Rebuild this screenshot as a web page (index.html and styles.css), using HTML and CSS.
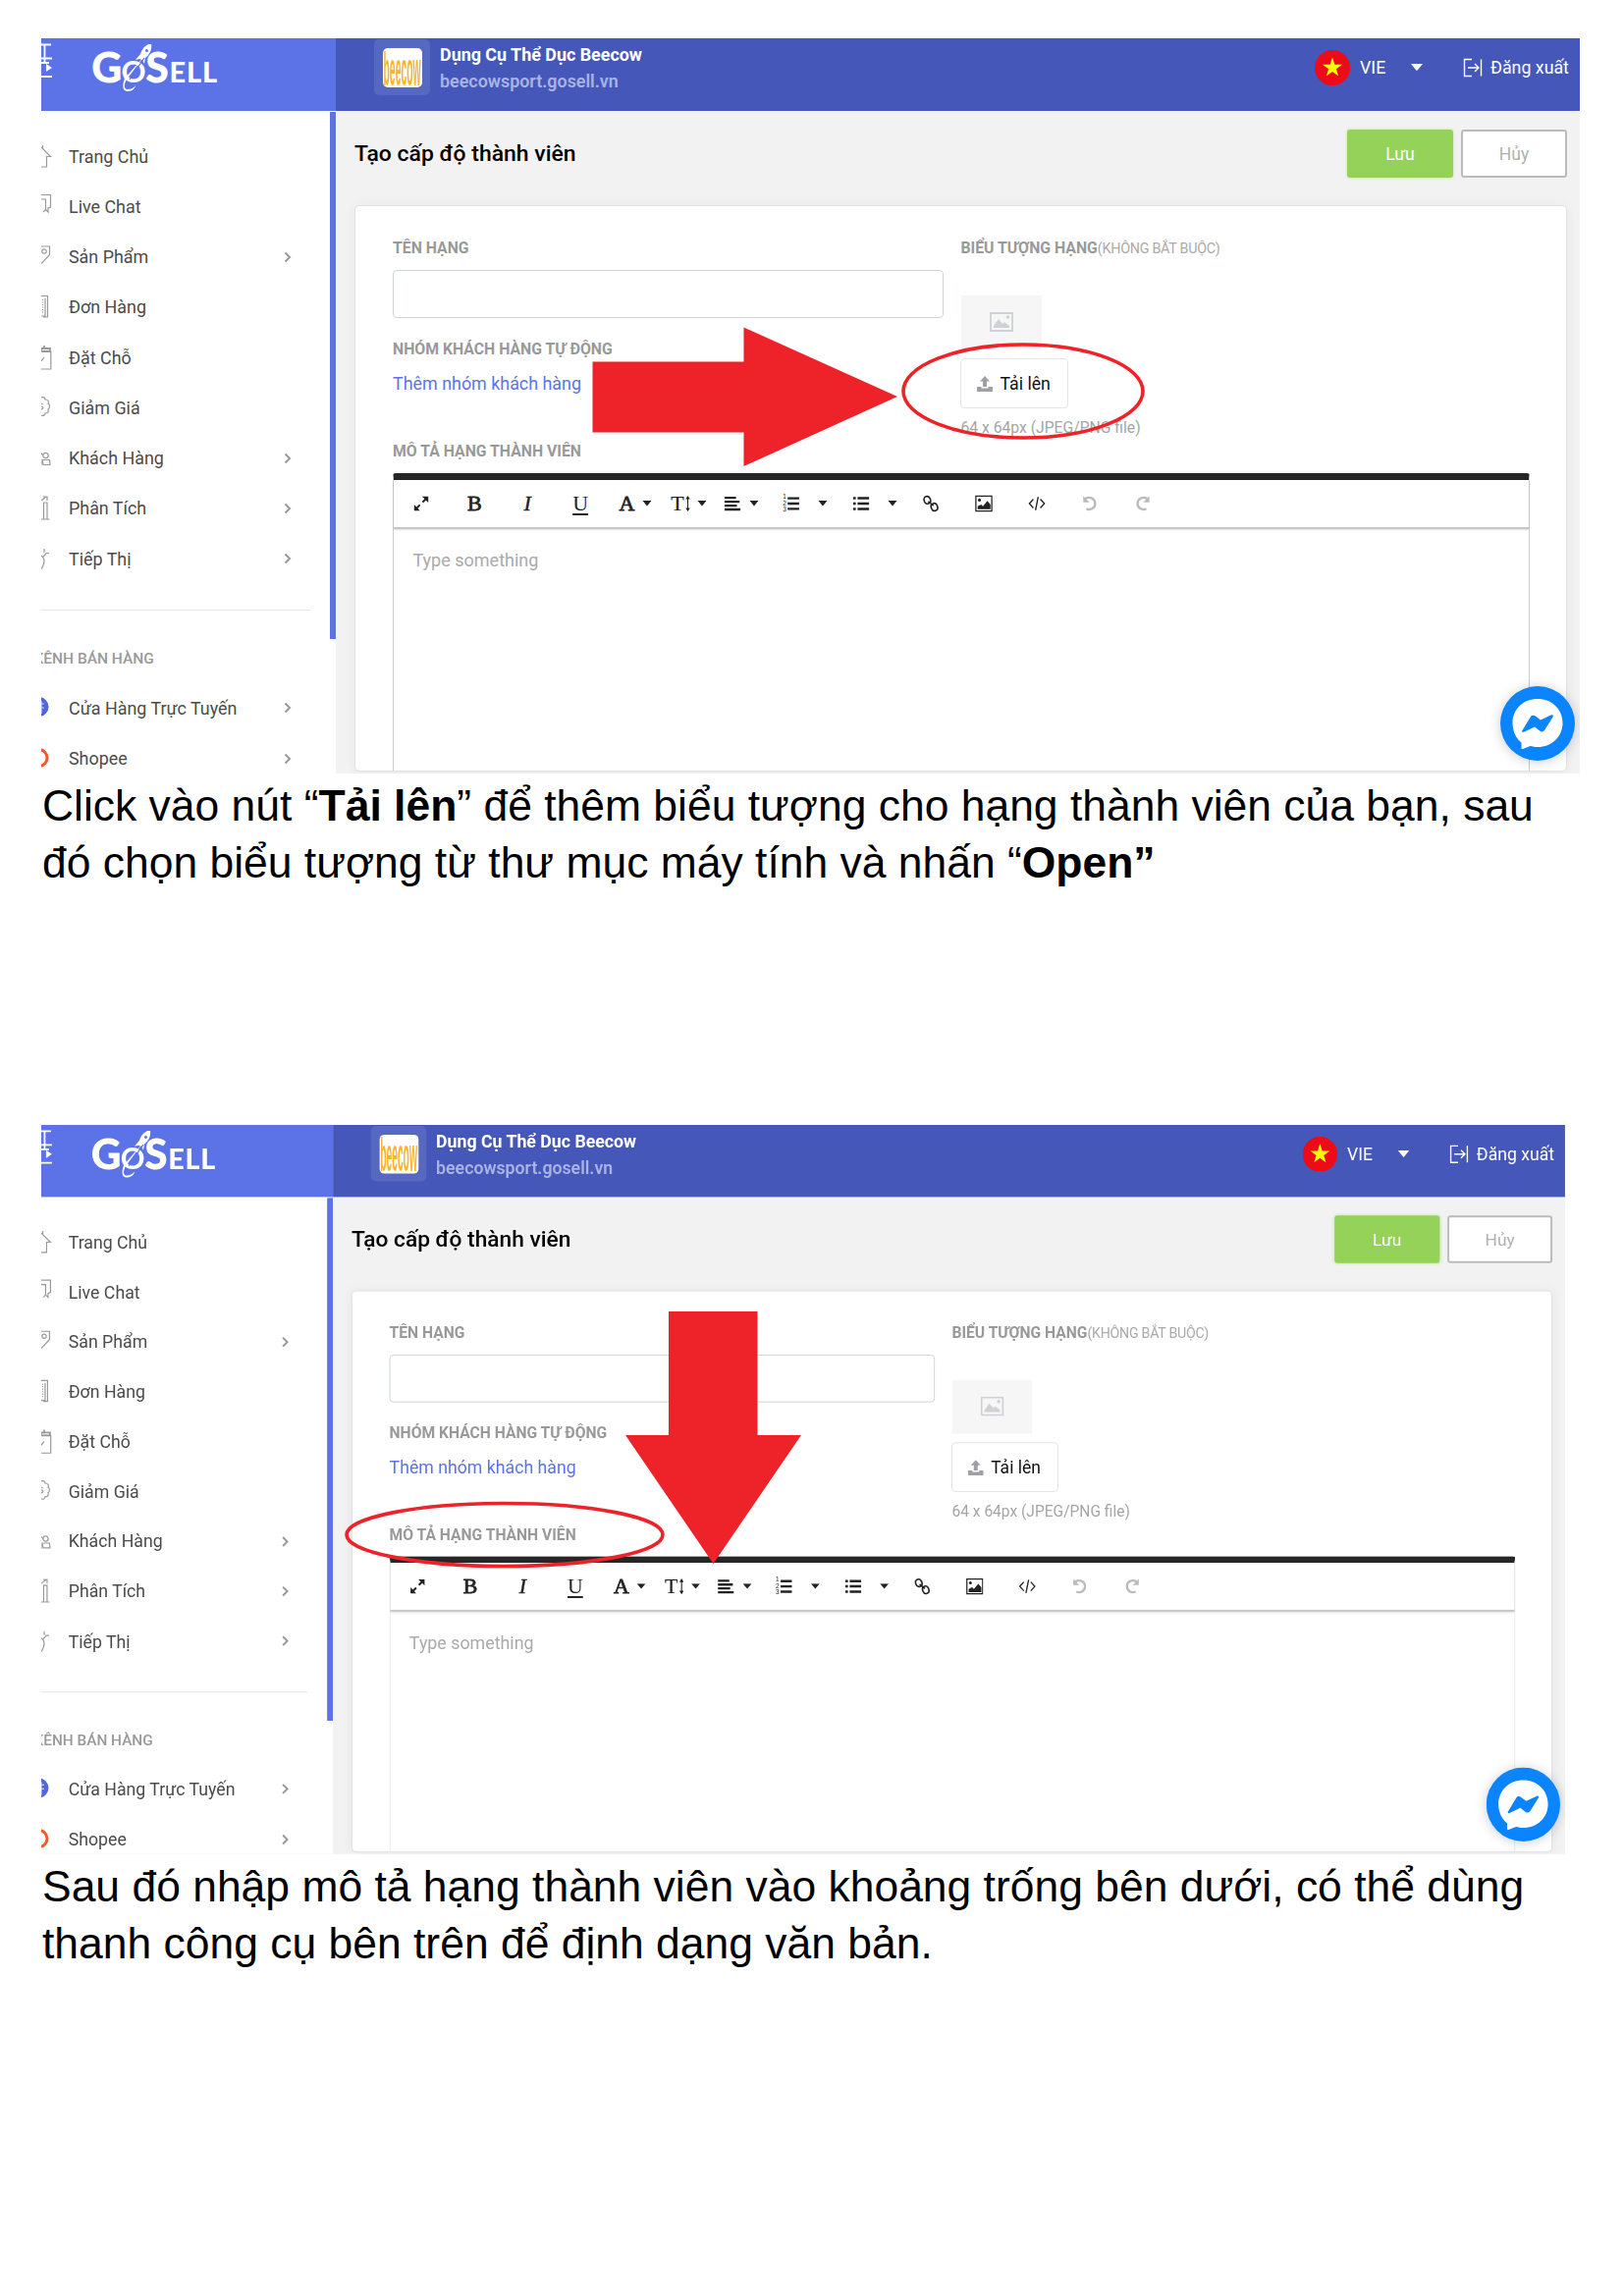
FILE: index.html
```html
<!DOCTYPE html>
<html lang="vi">
<head>
<meta charset="utf-8">
<title>Tạo cấp độ thành viên</title>
<link rel="stylesheet" href="styles.css">
</head>
<body>
<svg class="sprite" aria-hidden="true">
  <symbol id="menu" viewBox="0 0 12 40"><path d="M0 1.500h10M3.500 1.500v18M0 15.500h11M0 20h8M0 34h11" fill="none" stroke="#fff" stroke-width="1.800"/><path d="M5 21l6 4-6 4z" fill="#fff"/></symbol>
  <symbol id="home" viewBox="0 0 12 26"><path d="M1.500 2v4M0 4l9.500 9.500H5.500V24H0"/></symbol>
  <symbol id="chat" viewBox="0 0 12 26"><path d="M0 1.500h9.500V14L7 15v4l-3-3M0 6h4.500v10.500L2 19"/></symbol>
  <symbol id="tag" viewBox="0 0 12 26"><path d="M0 2h8.500v8.500L0 19.500"/><circle cx="3" cy="7" r="2.200"/></symbol>
  <symbol id="order" viewBox="0 0 12 26"><path d="M0 1.500h6.500V23H2M4 4v18H0"/><path d="M1.500 5v15" stroke-dasharray="1 1.500"/></symbol>
  <symbol id="book" viewBox="0 0 12 26"><path d="M0 7h9.800v18H0M0 17l3-4"/><path d="M0 4h9v3H0zM3 1v4" stroke-width="1.800"/></symbol>
  <symbol id="sale" viewBox="0 0 12 26"><path d="M0 3c2-1 4 0 4 2 3 0 4 2 3 4 2 1 2 5 0 6 1 3-1 4-3 4 0 2-2 3-4 2M0 9l1.500 1M0 15c3-1 2-3 0-3"/></symbol>
  <symbol id="users" viewBox="0 0 12 26"><circle cx="4.500" cy="10" r="2.700"/><path d="M0 8l2 2M1 14.500h7.500l.5 5H2zM0 16v4"/></symbol>
  <symbol id="chart" viewBox="0 0 12 26"><path d="M2.500 24V7h3.500v17M0 24h8.500M0 5l5-4M2 1h4v4"/></symbol>
  <symbol id="promo" viewBox="0 0 12 26"><path d="M0 24c3-5 4-9 2-12l-2-2M3 3v4M4.500 7.500h3.500M2 11l3-3"/></symbol>
  <symbol id="globe" viewBox="0 0 12 26"><circle cx="-2.500" cy="12" r="10" fill="#4f66e0" stroke="none"/><path d="M0 6v13M0 9h3M0 13h3" stroke="#cdd5ff"/></symbol>
  <symbol id="shop" viewBox="0 0 12 26"><circle cx="-2.500" cy="12" r="8.500" fill="none" stroke="#ee5a2c" stroke-width="3"/></symbol>
  <symbol id="chev" viewBox="0 0 8 12"><path d="M1.500 1.500L6 6l-4.500 4.500" fill="none" stroke="#999" stroke-width="2"/></symbol>
  <symbol id="caret" viewBox="0 0 10 6"><path d="M.5 0h9L5 5.500z" fill="currentColor"/></symbol>
  <symbol id="rocket" viewBox="0 0 136 60">
    <path d="M53 12L35 36c-3 5-3 10 1 10 3 0 6-1 8-4-1 5-5 6-9 6-5-1-4-8-2-13z" fill="#fff"/>
    <path d="M60 -1c1 6-1 11-6 15l-1 6-2-4-3-1-4 1 5-6c2-6 5-9 11-11z" fill="#fff"/>
    <path d="M38 36L53 14" stroke="#5c73e8" stroke-width="1.200"/>
    <circle cx="55.500" cy="6.500" r="1.500" fill="#5c73e8"/>
  </symbol>
  <symbol id="flag" viewBox="0 0 36 36"><circle cx="18" cy="18" r="18" fill="#ee0a17"/><path d="M18 7.500l2.400 7.200h7.600l-6.100 4.500 2.300 7.300-6.200-4.500-6.200 4.500 2.300-7.300-6.100-4.500h7.600z" fill="#ff0"/></symbol>
  <symbol id="exit" viewBox="0 0 20 20"><path d="M9 1.500H1.500v17H9M5 10h11M12 6l4 4-4 4M18.500 1.500v17" fill="none" stroke="#fff" stroke-width="1.400"/></symbol>
  <symbol id="pic" viewBox="0 0 24 20"><path d="M1 1h22v18H1z" fill="none" stroke="currentColor" stroke-width="1.800"/><circle cx="18.500" cy="5" r="1.800" fill="currentColor"/><path d="M4 16V14l5-7 4 5 2-2 5 4v2z" fill="currentColor"/></symbol>
  <symbol id="up" viewBox="0 0 16 16"><path d="M8 0l5 5.500h-3V11H6V5.500H3zM0 11h4.500v1.500h7V11H16v5H0z" fill="currentColor"/></symbol>
  <symbol id="expand" viewBox="0 0 20 20"><path d="M2 11l6.500 7H2zM18 9V2h-7z" fill="currentColor"/><path d="M4 16l4.500-4.500M11.500 8.500L16 4" stroke="currentColor" stroke-width="2.200"/></symbol>
  <symbol id="left" viewBox="0 0 20 20"><path d="M1 3.500h13M1 7.900h17M1 12.300h14M1 16.700h18" stroke="currentColor" stroke-width="2.600"/></symbol>
  <symbol id="tall" viewBox="0 0 5 20"><path d="M2.500 4v12" stroke="currentColor" stroke-width="1.200"/><path d="M2.500 1L5 5H0zM2.500 19L5 15H0z" fill="currentColor"/></symbol>
  <symbol id="lines" viewBox="0 0 14 20"><path d="M0 4h13M0 10h13M0 16h13" stroke="currentColor" stroke-width="2.600"/></symbol>
  <symbol id="ul" viewBox="0 0 20 20"><path d="M1 4h3M1 10h3M1 16h3M6 4h13M6 10h13M6 16h13" stroke="currentColor" stroke-width="2.800"/></symbol>
  <symbol id="link" viewBox="0 0 20 20"><g fill="none" stroke="currentColor" stroke-width="1.800"><rect x="2.500" y="1.800" width="7" height="8.500" rx="3.500" transform="rotate(-20 6 6)"/><rect x="10.500" y="9.700" width="7" height="8.500" rx="3.500" transform="rotate(-20 14 14)"/><path d="M7 7.500l6 5"/></g></symbol>
  <symbol id="img" viewBox="0 0 20 20"><path d="M1 1.500h18v17H1z" fill="none" stroke="currentColor" stroke-width="1.400"/><circle cx="5" cy="6" r="1.700" fill="currentColor"/><path d="M3 16.500V13l4-2 2 2 5-6 3.500 4v5.500z" fill="currentColor"/></symbol>
  <symbol id="code" viewBox="0 0 20 16"><path d="M6 3L1.500 8 6 13M14 3l4.500 5-4.500 5M11.500 .5l-3 15" fill="none" stroke="currentColor" stroke-width="1.500"/></symbol>
  <symbol id="undo" viewBox="0 0 20 20"><path d="M5 4.500c5-3 11 0 11 5.500 0 5-5 8-10 6" fill="none" stroke="currentColor" stroke-width="2.600"/><path d="M2.500 1.500v7h7z" fill="currentColor"/></symbol>
  <symbol id="msg" viewBox="0 0 76 76"><circle cx="38" cy="38" r="38" fill="#0a84ff"/><path d="M38 13c14.500 0 25.500 10.500 25.500 24.500S52.500 62 38 62c-3 0-5-.5-7.500-1L23 64c-1 .3-1.500 0-1.500-1v-5.500C16 53 12.500 46 12.500 37.500 12.500 23.500 23.500 13 38 13z" fill="#fff"/><path d="M22.500 45l8.500-14c1-1.500 3-1.700 4.500-.7l5.500 4.200 10.500-4.900c2-.9 3 .2 2 1.800L45 45c-1 1.500-3 1.800-4.500.8L35 41.500l-10.500 5c-2 1-3 0-2-1.500z" fill="#0a84ff"/></symbol>
</svg>

<main class="page">
  <section class="shot shot-1">
    <div class="app">
      <aside class="side">
        <div class="brand"><svg class="menu"><use href="#menu"/></svg><div class="logo"><span>G</span><span class="o">O</span><span>S</span><span class="ell">ELL</span><svg><use href="#rocket"/></svg></div></div>
        <nav class="nav">
          <a><svg><use href="#home"/></svg><span>Trang Chủ</span></a>
          <a><svg><use href="#chat"/></svg><span>Live Chat</span></a>
          <a><svg><use href="#tag"/></svg><span>Sản Phẩm</span><svg class="chev"><use href="#chev"/></svg></a>
          <a><svg><use href="#order"/></svg><span>Đơn Hàng</span></a>
          <a><svg><use href="#book"/></svg><span>Đặt Chỗ</span></a>
          <a><svg><use href="#sale"/></svg><span>Giảm Giá</span></a>
          <a><svg><use href="#users"/></svg><span>Khách Hàng</span><svg class="chev"><use href="#chev"/></svg></a>
          <a><svg><use href="#chart"/></svg><span>Phân Tích</span><svg class="chev"><use href="#chev"/></svg></a>
          <a><svg><use href="#promo"/></svg><span>Tiếp Thị</span><svg class="chev"><use href="#chev"/></svg></a>
          <h3>KÊNH BÁN HÀNG</h3>
          <a><svg><use href="#globe"/></svg><span>Cửa Hàng Trực Tuyến</span><svg class="chev"><use href="#chev"/></svg></a>
          <a><svg><use href="#shop"/></svg><span>Shopee</span><svg class="chev"><use href="#chev"/></svg></a>
        </nav>
      </aside>
      <div class="main">
        <header class="top">
          <div class="avatar"><div class="bee"><span>beecow</span></div></div>
          <div class="store"><b>Dụng Cụ Thể Dục Beecow</b><span>beecowsport.gosell.vn</span></div>
          <div class="tools"><svg class="flag"><use href="#flag"/></svg><span class="lang">VIE</span><svg class="down"><use href="#caret"/></svg><svg class="exit"><use href="#exit"/></svg><span class="out">Đăng xuất</span></div>
        </header>
        <div class="heading"><h1>Tạo cấp độ thành viên</h1><button class="btn save">Lưu</button><button class="btn cancel">Hủy</button></div>
        <div class="card">
          <div class="form">
            <div class="col">
              <label>TÊN HẠNG</label>
              <div class="input"></div>
              <label>NHÓM KHÁCH HÀNG TỰ ĐỘNG</label>
              <a class="add">Thêm nhóm khách hàng</a>
              <label>MÔ TẢ HẠNG THÀNH VIÊN</label>
            </div>
            <div class="col">
              <label>BIỂU TƯỢNG HẠNG<i>(KHÔNG BẮT BUỘC)</i></label>
              <div class="thumb"><svg><use href="#pic"/></svg></div>
              <div class="upload"><svg><use href="#up"/></svg><span>Tải lên</span></div>
              <p class="hint">64 x 64px (JPEG/PNG file)</p>
            </div>
          </div>
          <div class="editor">
            <div class="bar">
              <span><svg><use href="#expand"/></svg></span><span><b>B</b></span><span><em>I</em></span><span><u>U</u></span>
              <span class="menu-btn"><b>A</b><svg class="car"><use href="#caret"/></svg></span>
              <span class="menu-btn"><b class="size">T</b><svg class="tall"><use href="#tall"/></svg><svg class="car"><use href="#caret"/></svg></span>
              <span class="menu-btn"><svg><use href="#left"/></svg><svg class="car"><use href="#caret"/></svg></span>
              <span class="list"><span class="ol"><small>1<br>2<br>3</small><svg><use href="#lines"/></svg></span><svg class="car"><use href="#caret"/></svg></span>
              <span class="list"><svg><use href="#ul"/></svg><svg class="car"><use href="#caret"/></svg></span>
              <span><svg><use href="#link"/></svg></span><span><svg><use href="#img"/></svg></span><span><svg><use href="#code"/></svg></span><span class="off"><svg><use href="#undo"/></svg></span><span class="off flip"><svg><use href="#undo"/></svg></span>
            </div>
            <p class="ph">Type something</p>
          </div>
        </div>
      </div>
      <svg class="msg"><use href="#msg"/></svg>
    </div>
    <svg class="marks" viewBox="0 0 1567 749"><path d="M561.500 329.500H715.500V294.500L872 365 715.500 436V401.500H561.500z" fill="#ee2229"/><ellipse cx="1000" cy="359.500" rx="122" ry="47.500" fill="none" stroke="#ee2229" stroke-width="3.600"/></svg>
  </section>
  <p class="caption">Click vào nút “<b>Tải lên</b>” để thêm biểu tượng cho hạng thành viên của bạn, sau<br>đó chọn biểu tượng từ thư mục máy tính và nhấn “<b>Open”</b></p>

  <section class="shot shot-2">
    <div class="app">
      <aside class="side">
        <div class="brand"><svg class="menu"><use href="#menu"/></svg><div class="logo"><span>G</span><span class="o">O</span><span>S</span><span class="ell">ELL</span><svg><use href="#rocket"/></svg></div></div>
        <nav class="nav">
          <a><svg><use href="#home"/></svg><span>Trang Chủ</span></a>
          <a><svg><use href="#chat"/></svg><span>Live Chat</span></a>
          <a><svg><use href="#tag"/></svg><span>Sản Phẩm</span><svg class="chev"><use href="#chev"/></svg></a>
          <a><svg><use href="#order"/></svg><span>Đơn Hàng</span></a>
          <a><svg><use href="#book"/></svg><span>Đặt Chỗ</span></a>
          <a><svg><use href="#sale"/></svg><span>Giảm Giá</span></a>
          <a><svg><use href="#users"/></svg><span>Khách Hàng</span><svg class="chev"><use href="#chev"/></svg></a>
          <a><svg><use href="#chart"/></svg><span>Phân Tích</span><svg class="chev"><use href="#chev"/></svg></a>
          <a><svg><use href="#promo"/></svg><span>Tiếp Thị</span><svg class="chev"><use href="#chev"/></svg></a>
          <h3>KÊNH BÁN HÀNG</h3>
          <a><svg><use href="#globe"/></svg><span>Cửa Hàng Trực Tuyến</span><svg class="chev"><use href="#chev"/></svg></a>
          <a><svg><use href="#shop"/></svg><span>Shopee</span><svg class="chev"><use href="#chev"/></svg></a>
        </nav>
      </aside>
      <div class="main">
        <header class="top">
          <div class="avatar"><div class="bee"><span>beecow</span></div></div>
          <div class="store"><b>Dụng Cụ Thể Dục Beecow</b><span>beecowsport.gosell.vn</span></div>
          <div class="tools"><svg class="flag"><use href="#flag"/></svg><span class="lang">VIE</span><svg class="down"><use href="#caret"/></svg><svg class="exit"><use href="#exit"/></svg><span class="out">Đăng xuất</span></div>
        </header>
        <div class="heading"><h1>Tạo cấp độ thành viên</h1><button class="btn save">Lưu</button><button class="btn cancel">Hủy</button></div>
        <div class="card">
          <div class="form">
            <div class="col">
              <label>TÊN HẠNG</label>
              <div class="input"></div>
              <label>NHÓM KHÁCH HÀNG TỰ ĐỘNG</label>
              <a class="add">Thêm nhóm khách hàng</a>
              <label>MÔ TẢ HẠNG THÀNH VIÊN</label>
            </div>
            <div class="col">
              <label>BIỂU TƯỢNG HẠNG<i>(KHÔNG BẮT BUỘC)</i></label>
              <div class="thumb"><svg><use href="#pic"/></svg></div>
              <div class="upload"><svg><use href="#up"/></svg><span>Tải lên</span></div>
              <p class="hint">64 x 64px (JPEG/PNG file)</p>
            </div>
          </div>
          <div class="editor">
            <div class="bar">
              <span><svg><use href="#expand"/></svg></span><span><b>B</b></span><span><em>I</em></span><span><u>U</u></span>
              <span class="menu-btn"><b>A</b><svg class="car"><use href="#caret"/></svg></span>
              <span class="menu-btn"><b class="size">T</b><svg class="tall"><use href="#tall"/></svg><svg class="car"><use href="#caret"/></svg></span>
              <span class="menu-btn"><svg><use href="#left"/></svg><svg class="car"><use href="#caret"/></svg></span>
              <span class="list"><span class="ol"><small>1<br>2<br>3</small><svg><use href="#lines"/></svg></span><svg class="car"><use href="#caret"/></svg></span>
              <span class="list"><svg><use href="#ul"/></svg><svg class="car"><use href="#caret"/></svg></span>
              <span><svg><use href="#link"/></svg></span><span><svg><use href="#img"/></svg></span><span><svg><use href="#code"/></svg></span><span class="off"><svg><use href="#undo"/></svg></span><span class="off flip"><svg><use href="#undo"/></svg></span>
            </div>
            <p class="ph">Type something</p>
          </div>
        </div>
      </div>
      <svg class="msg"><use href="#msg"/></svg>
    </div>
    <svg class="marks" viewBox="0 0 1552 743"><path d="M639 190H729.500V316H774L684.500 447 595 316H639z" fill="#ee2229"/><ellipse cx="472" cy="417.500" rx="161" ry="32" fill="none" stroke="#ee2229" stroke-width="3.600"/></svg>
  </section>
  <p class="caption">Sau đó nhập mô tả hạng thành viên vào khoảng trống bên dưới, có thể dùng<br>thanh công cụ bên trên để định dạng văn bản.</p>
</main>
</body>
</html>
```
FILE: styles.css
```css
* { box-sizing: border-box; }
body { margin: 0; background: #fff; font-family: Roboto, sans-serif; color: #4b4b4b; }
h1, h3, p { margin: 0; }
svg { display: block; flex: none; overflow: hidden; }
.sprite { position: absolute; width: 0; height: 0; }
.page { height: 2339px; padding: 39px 0 0 42px; overflow: hidden; }

.shot { position: relative; width: 1567px; height: 749px; }
.shot-2 { width: 1552px; height: 743px; margin-top: 237px; }
.app { position: relative; display: flex; width: 1567px; height: 749px; overflow: hidden; background: #f2f2f2; }
.shot-2 .app { transform: scale(.9904, .9918); transform-origin: 0 0; }
.marks { position: absolute; inset: 0; width: 100%; height: 100%; }

/* Sidebar */
.side { width: 300px; height: 749px; overflow: hidden; background: #fff; }
.brand { display: flex; height: 74px; background: #5c73e8; }
.menu { width: 12px; height: 40px; margin-top: 5px; }
.logo { position: relative; display: flex; align-items: baseline; width: 136px; height: 60px; margin: 4px 0 0 39.500px; font: 700 42px/50px Lato, sans-serif; color: #fff; -webkit-text-stroke: 1px #fff; }
.logo span { width: 30px; }
.logo .o { width: 25px; font-size: 31px; -webkit-text-stroke-width: 0; }
.logo span:nth-child(3) { width: 24px; }
.logo .ell { width: 54px; font-size: 29px; font-weight: 900; letter-spacing: .8px; -webkit-text-stroke-width: 0; }
.logo svg { position: absolute; left: 0; top: 2px; width: 136px; height: 60px; overflow: visible; }
.nav { position: relative; padding-top: 20.500px; height: 675px; }
.nav::after { content: ""; position: absolute; top: 1px; right: 0; width: 6px; height: 537px; background: #5c73e8; }
.nav a { display: flex; align-items: center; height: 51.250px; font-size: 17.900px; }
.nav a svg { width: 12px; height: 26px; fill: none; stroke: #999; stroke-width: 1.200; }
.nav a span { width: 219px; margin-left: 16px; white-space: nowrap; }
.nav a .chev { width: 8px; height: 12px; }
.nav h3 { width: 274px; margin: 26.500px 0 14.500px; padding-top: 39px; border-top: 1px solid #e6e6e6; font-size: 15.500px; line-height: 20px; font-weight: 500; color: #999; text-indent: -7.500px; white-space: nowrap; }

/* Header */
.main { width: 1267px; }
.top { display: flex; height: 73.500px; padding: 1px 11px 0 38.500px; background: #4557b8; }
.avatar { width: 57px; height: 57px; padding: 9px; border-radius: 5px; background: #5768c0; }
.bee { width: 40px; height: 40px; border-radius: 5px; background: #fff; overflow: hidden; }
.bee span { display: block; width: 40px; height: 15px; margin-top: -13.500px; padding-left: 1px; font: 700 10.400px/15px "Liberation Sans", Arial, sans-serif; color: #fbb42c; transform: scale(1, 4.600); transform-origin: 0 0; }
.store { display: flex; flex-direction: column; margin: 3px 0 0 10.500px; font-size: 17.900px; line-height: 26.500px; color: #fff; white-space: nowrap; }
.store span { font-weight: 600; color: #a9b3e4; }
.tools { display: flex; align-items: center; height: 36px; margin: 11px 0 0 auto; font-size: 17.800px; line-height: 20px; color: #fff; white-space: nowrap; }
.flag { width: 36px; height: 36px; }
.lang { width: 51px; margin-left: 10px; }
.down { width: 14px; height: 8px; }
.exit { width: 20px; height: 20px; margin-left: 40px; }
.out { width: 80px; margin-left: 8px; }

.heading { display: flex; align-items: center; height: 49px; margin: 19.500px 13px 27.500px 19px; gap: 8px; }
.heading h1 { flex: 1; font-size: 22.950px; line-height: 28px; font-weight: 500; color: #000; }
.btn { width: 108px; height: 49.500px; padding: 0; border: 0; border-radius: 3px; font: 400 17.500px Roboto, sans-serif; }
.save { background: #94d25a; color: #fff; box-shadow: 0 0 3px #94d25a88; }
.cancel { border: 2px solid #bbb; background: #fff; color: #b0b0b0; }

/* Form */
.card { width: 1235px; height: 577px; margin-left: 18.500px; padding: 0 38.500px; border: 1.500px solid #e2e2e2; border-radius: 5px; background: #fff; box-shadow: 0 0 12px #0000000c; }
.form { display: grid; grid-template-columns: 578.500px 1fr; height: 272.500px; padding-top: 33px; }
.col { display: flex; flex-direction: column; }
.col label { font-size: 15.800px; line-height: 20px; font-weight: 700; color: #999; white-space: nowrap; }
.col i { font-size: 14.300px; font-style: normal; font-weight: 400; color: #aaa; letter-spacing: -.25px; }
.input { width: 561px; height: 49px; margin: 12px 0 22px; border: 1.500px solid #cdd4da; border-radius: 4px; }
.add { height: 24px; margin: 13px 0 47px; font-size: 17.900px; line-height: 24px; color: #5c73e8; }
.thumb { display: grid; place-items: center; width: 82px; height: 55px; margin-top: 38px; background: #f6f6f7; color: #cfd1d5; }
.thumb svg { width: 24px; height: 20px; }
.upload { display: flex; align-items: center; gap: 8px; width: 110px; height: 51px; margin: 9.500px 0 9px -1px; padding-left: 16px; border: 1.500px solid #e4e4e4; border-radius: 4px; font-size: 17.700px; color: #111; white-space: nowrap; }
.upload svg { width: 16px; height: 16px; color: #a0a0a4; }
.hint { font-size: 15.700px; line-height: 22px; color: #a5a5a5; }

/* Editor */
.editor { width: 1158px; height: 303px; border: solid #ccc; border-width: 0 1.500px; border-top: 7px solid #262626; border-radius: 3px 3px 0 0; }
.bar { display: flex; height: 50px; padding-left: 1.500px; border-bottom: 2px solid #c6c6c6; box-shadow: 0 1px 2px #0002; color: #222; font-family: "Liberation Serif", serif; font-size: 22px; }
.bar span { display: flex; align-items: center; justify-content: center; width: 53.900px; gap: 5px; }
.bar span svg { width: 18px; height: 18px; }
.bar b { font-weight: 400; -webkit-text-stroke: .8px #222; }
.bar em { -webkit-text-stroke: .4px #222; }
.bar u { text-underline-offset: 3px; text-decoration-thickness: 1.500px; }
.bar .size { -webkit-text-stroke-width: .2px; }
.bar .menu-btn { gap: 8px; padding-left: 5px; }
.bar .menu-btn .tall { width: 5px; height: 18px; margin: 0 -1px 0 -7px; }
.bar .list { width: 70.800px; gap: 18px; padding-left: 10px; }
.bar .ol { width: 18px; gap: 0; flex: none; }
.bar .ol small { width: 5px; font: 6.500px/6.500px "Liberation Sans", Arial, sans-serif; }
.bar .ol svg { width: 13px; }
.bar span .car { width: 10px; height: 6px; }
.bar .off { color: #bbb; }
.flip { transform: scaleX(-1); }
.ph { padding: 20px 0 0 19.500px; font-size: 18px; line-height: 24px; color: #aaa; }
.msg { position: absolute; left: 1486px; top: 659.500px; width: 76px; height: 76px; overflow: visible; filter: drop-shadow(0 1px 6px #0003); }

.caption { margin: 0; padding: 3.700px 0 0 1px; height: 121px; font: 44.440px/58.700px "Liberation Sans", Arial, sans-serif; color: #000; white-space: nowrap; }
```
